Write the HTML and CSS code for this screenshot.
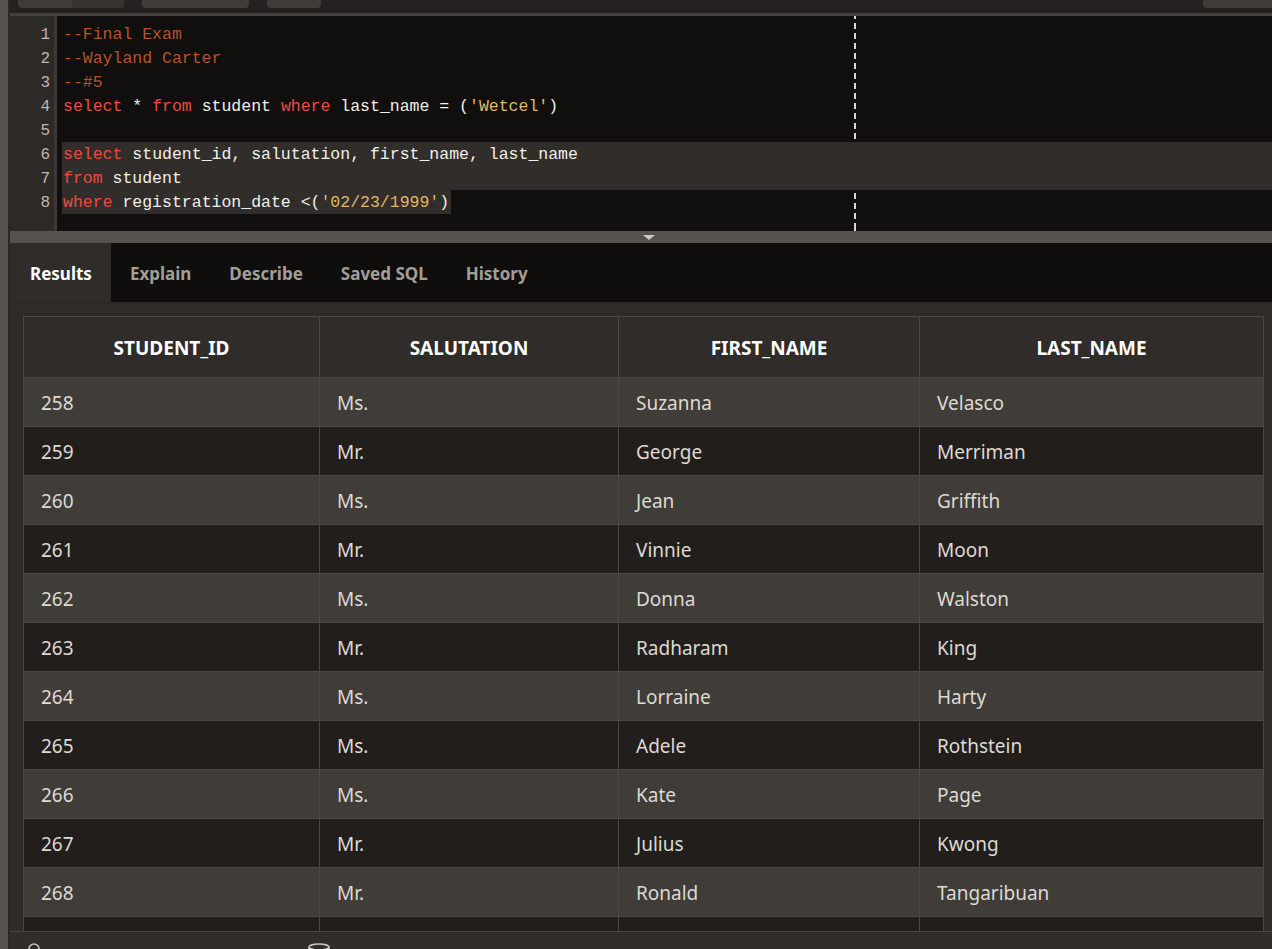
FILE: index.html
```html
<!DOCTYPE html>
<html lang="en">
<head>
<meta charset="utf-8">
<title>SQL Worksheet</title>
<link rel="stylesheet" href="styles.css">
</head>
<body>
<div class="app">
  <div class="rail"></div>
  <div class="main">
    <div class="toolbar">
      <div class="btn-group"><span class="btn seg1"></span><span class="btn seg2"></span></div>
      <span class="btn b2"></span>
      <span class="btn b3"></span>
      <span class="spacer"></span>
      <span class="btn b4"></span>
    </div>
    <div class="editor">
      <div class="gutter">
        <div>1</div><div>2</div><div>3</div><div>4</div><div>5</div><div>6</div><div>7</div><div>8</div>
      </div>
      <div class="code">
        <div class="guide"></div>
        <div class="line"><span class="cm">--Final Exam</span></div>
        <div class="line"><span class="cm">--Wayland Carter</span></div>
        <div class="line"><span class="cm">--#5</span></div>
        <div class="line"><span class="kw">select</span> * <span class="kw">from</span> student <span class="kw">where</span> last_name = (<span class="st">'Wetcel'</span>)</div>
        <div class="line"></div>
        <div class="line sel"><span class="kw">select</span> student_id, salutation, first_name, last_name</div>
        <div class="line sel"><span class="kw">from</span> student</div>
        <div class="line sel-part"><span class="kw">where</span> registration_date &lt;(<span class="st">'02/23/1999'</span>)</div>
      </div>
    </div>
    <div class="splitter"><span class="tri"></span></div>
    <div class="tabs">
      <div class="tab active">Results</div>
      <div class="tab">Explain</div>
      <div class="tab">Describe</div>
      <div class="tab">Saved SQL</div>
      <div class="tab">History</div>
    </div>
    <div class="results">
      <table class="grid">
        <colgroup><col class="c1"><col class="c2"><col class="c3"><col class="c4"></colgroup>
        <thead>
          <tr><th>STUDENT_ID</th><th>SALUTATION</th><th>FIRST_NAME</th><th>LAST_NAME</th></tr>
        </thead>
        <tbody>
          <tr><td>258</td><td>Ms.</td><td>Suzanna</td><td>Velasco</td></tr>
          <tr><td>259</td><td>Mr.</td><td>George</td><td>Merriman</td></tr>
          <tr><td>260</td><td>Ms.</td><td>Jean</td><td>Griffith</td></tr>
          <tr><td>261</td><td>Mr.</td><td>Vinnie</td><td>Moon</td></tr>
          <tr><td>262</td><td>Ms.</td><td>Donna</td><td>Walston</td></tr>
          <tr><td>263</td><td>Mr.</td><td>Radharam</td><td>King</td></tr>
          <tr><td>264</td><td>Ms.</td><td>Lorraine</td><td>Harty</td></tr>
          <tr><td>265</td><td>Ms.</td><td>Adele</td><td>Rothstein</td></tr>
          <tr><td>266</td><td>Ms.</td><td>Kate</td><td>Page</td></tr>
          <tr><td>267</td><td>Mr.</td><td>Julius</td><td>Kwong</td></tr>
          <tr><td>268</td><td>Mr.</td><td>Ronald</td><td>Tangaribuan</td></tr>
          <tr class="cut"><td></td><td></td><td></td><td></td></tr>
        </tbody>
      </table>
    </div>
    <div class="status">
      <svg class="ico-search" width="16" height="16" viewBox="0 0 16 16"><circle cx="7" cy="7" r="5" fill="none" stroke="#c8c4be" stroke-width="1.6"/><path d="M11 11l4 4" stroke="#c8c4be" stroke-width="1.6"/></svg>
      <svg class="ico-db" width="24" height="16" viewBox="0 0 24 16"><ellipse cx="12" cy="4" rx="10" ry="3" fill="none" stroke="#c8c4be" stroke-width="1.6"/><path d="M2 4v9c0 1.7 4.5 3 10 3s10-1.3 10-3V4" fill="none" stroke="#c8c4be" stroke-width="1.6"/></svg>
    </div>
  </div>
</div>
</body>
</html>
```
FILE: styles.css
```css
html, body {
  margin: 0;
  padding: 0;
  height: 949px;
  overflow: hidden;
  background: #2e2b28;
}

.app {
  display: flex;
  height: 949px;
}

.rail {
  width: 8px;
  flex: none;
  background: #57534f;
}

.main {
  flex: 1;
  display: flex;
  flex-direction: column;
  border-left: 2px solid #2a2725;
  min-width: 0;
}

/* toolbar */
.toolbar {
  height: 13px;
  flex: none;
  background: #242120;
  display: flex;
  align-items: flex-start;
  border-bottom: 3px solid #44403c;
}
.btn {
  display: block;
  height: 8px;
  background: #3e3b38;
  border-radius: 0 0 4px 4px;
}
.btn-group {
  display: flex;
  margin-left: 8px;
}
.seg1 { width: 54px; border-radius: 0 0 0 4px; }
.seg2 { width: 52px; background: #35322f; border-radius: 0 0 4px 0; }
.b2 { width: 107px; margin-left: 18px; }
.b3 { width: 54px; margin-left: 18px; }
.spacer { flex: 1; }
.b4 { width: 69px; border-radius: 0 0 0 4px; }

/* editor */
.editor {
  height: 215px;
  flex: none;
  display: flex;
  background: #100f0d;
}
.gutter {
  width: 40px;
  flex: none;
  background: #2c2927;
  border-right: 3px solid #3b3835;
  padding: 7px 4px 0 0;
  text-align: right;
  font-family: "Liberation Mono", monospace;
  font-size: 16px;
  line-height: 24px;
  color: #bcb8b2;
}
.code {
  flex: 1;
  position: relative;
  padding: 6px 0 0 5px;
  overflow: hidden;
  font-family: "Liberation Mono", monospace;
  font-size: 16.5px;
  line-height: 24px;
  color: #f2f0ec;
}
.guide {
  position: absolute;
  left: 797px;
  top: 0;
  bottom: 0;
  width: 2px;
  background: repeating-linear-gradient(to bottom, #d6d6d6 0 6px, transparent 6px 10px);
  background-position: 0 -3px;
}
.line {
  position: relative;
  height: 24px;
  line-height: 26px;
  padding-left: 1px;
  white-space: pre;
}
.line.sel {
  background: #312d2a;
}
.line.sel-part {
  background: #312d2a;
  width: fit-content;
  padding-right: 2px;
}
.cm { color: #b4542c; }
.kw { color: #ee4a3c; }
.st { color: #e6b566; }

/* splitter */
.splitter {
  height: 12px;
  flex: none;
  background: #55514c;
  display: flex;
  justify-content: center;
}
.tri {
  margin-top: 4px;
  margin-left: 16px;
  width: 0;
  height: 0;
  border-left: 6px solid transparent;
  border-right: 6px solid transparent;
  border-top: 5px solid #cbc9c6;
}

/* tabs */
.tabs {
  height: 59px;
  flex: none;
  display: flex;
  background: #0f0e0c;
  border-bottom: 1px solid #2a2725;
  font-family: "Noto Sans", "Liberation Sans", sans-serif;
  font-weight: 700;
  font-size: 17px;
}
.tab {
  display: flex;
  align-items: center;
  padding: 2px 19px 0;
  color: #a29e98;
}
.tab.active {
  background: #302c29;
  color: #ffffff;
  padding-left: 20px;
}

/* results */
.results {
  flex: 1;
  min-height: 0;
  overflow: hidden;
  padding: 13px 0 0 13px;
  background: #2e2b28;
}
.grid {
  width: 1241px;
  table-layout: fixed;
  border-collapse: collapse;
  font-family: "Noto Sans", "Liberation Sans", sans-serif;
  font-size: 19px;
}
.c1 { width: 296px; }
.c2 { width: 299px; }
.c3 { width: 301px; }
.c4 { width: 344px; }
.grid th, .grid td {
  border: 1px solid #4b4744;
  padding: 0;
}
.grid th {
  height: 58px;
  padding-top: 2px;
  background: #302c29;
  color: #ffffff;
  font-weight: 700;
  font-size: 19px;
  text-align: center;
}
.grid td {
  height: 47px;
  padding: 1px 0 0 17px;
  color: #ddd9d3;
  font-weight: 400;
}
.grid tbody tr:nth-child(odd) td { background: #403c38; }
.grid tbody tr:nth-child(even) td { background: #221e1c; }

/* status bar */
.status {
  height: 17px;
  flex: none;
  border-top: 1px solid #4b4744;
  background: #302d2a;
  display: flex;
  align-items: flex-start;
  overflow: hidden;
}
.ico-search {
  margin: 10px 0 0 17px;
  flex: none;
}
.ico-db {
  margin: 11px 0 0 264px;
  flex: none;
}
```
